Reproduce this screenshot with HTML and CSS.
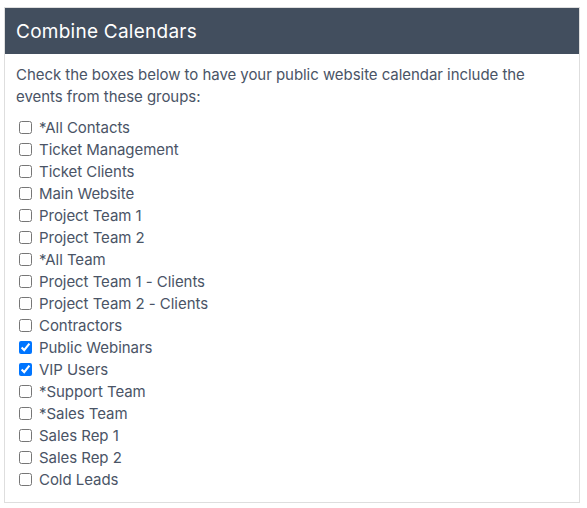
FILE: index.html
```html
<!DOCTYPE html>
<html>
<head>
<meta charset="utf-8">
<link rel="stylesheet" href="styles.css">
</head>
<body>
<div class="card">
  <div class="card-header">Combine Calendars</div>
  <div class="card-body">
    <p class="intro">Check the boxes below to have your public website calendar include the events from these groups:</p>
    <ul class="groups">
      <li><label><input type="checkbox"><span>*All Contacts</span></label></li>
      <li><label><input type="checkbox"><span>Ticket Management</span></label></li>
      <li><label><input type="checkbox"><span>Ticket Clients</span></label></li>
      <li><label><input type="checkbox"><span>Main Website</span></label></li>
      <li><label><input type="checkbox"><span>Project Team 1</span></label></li>
      <li><label><input type="checkbox"><span>Project Team 2</span></label></li>
      <li><label><input type="checkbox"><span>*All Team</span></label></li>
      <li><label><input type="checkbox"><span>Project Team 1 - Clients</span></label></li>
      <li><label><input type="checkbox"><span>Project Team 2 - Clients</span></label></li>
      <li><label><input type="checkbox"><span>Contractors</span></label></li>
      <li><label><input type="checkbox" checked><span>Public Webinars</span></label></li>
      <li><label><input type="checkbox" checked><span>VIP Users</span></label></li>
      <li><label><input type="checkbox"><span>*Support Team</span></label></li>
      <li><label><input type="checkbox"><span>*Sales Team</span></label></li>
      <li><label><input type="checkbox"><span>Sales Rep 1</span></label></li>
      <li><label><input type="checkbox"><span>Sales Rep 2</span></label></li>
      <li><label><input type="checkbox"><span>Cold Leads</span></label></li>
    </ul>
  </div>
</div>
</body>
</html>
```
FILE: styles.css
```css
html, body {
  margin: 0;
  padding: 0;
  background: #ffffff;
}
body {
  font-family: Inter, "Open Sans", sans-serif;
  color: #4a5466;
  font-size: 15px;
  letter-spacing: -0.05px;
}
.card {
  margin: 7px 7px 0 4px;
  border: 1px solid #dedede;
  background: #fff;
}
.card-header {
  background: #424e5e;
  color: #ffffff;
  height: 46px;
  display: flex;
  align-items: center;
  padding: 0 11px;
  font-size: 19px;
  letter-spacing: 0.25px;
  font-weight: 400;
}
.card-body {
  padding: 10px 10px 12px 10px;
}
.intro {
  margin: 0 0 8px 1px;
  line-height: 22px;
}
.groups {
  list-style: none;
  margin: 0;
  padding: 0;
}
.groups li {
  height: 22px;
  line-height: 22px;
  display: flex;
  align-items: center;
}
.groups label {
  display: flex;
  align-items: center;
}
.groups input {
  margin: 1px 7px 0 4px;
  width: 13px;
  height: 13px;
}
.groups span {
  padding-top: 2px;
}
```
